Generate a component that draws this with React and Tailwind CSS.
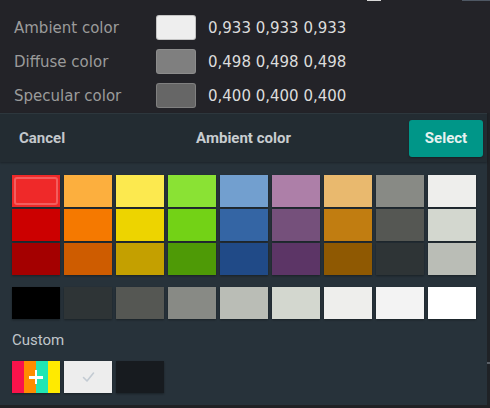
import React from "react";

const rows = [
  ["#ef2929", "#fcaf3e", "#fce94f", "#8ae234", "#729fcf", "#ad7fa8", "#e9b96e", "#888a85", "#eeeeec"],
  ["#cc0000", "#f57900", "#edd400", "#73d216", "#3465a4", "#75507b", "#c17d11", "#555753", "#d3d7cf"],
  ["#a40000", "#ce5c00", "#c4a000", "#4e9a06", "#204a87", "#5c3566", "#8f5902", "#2e3436", "#babdb6"],
];
const grays = ["#000000", "#2e3436", "#555753", "#888a85", "#babdb6", "#d3d7cf", "#eeeeec", "#f3f3f3", "#ffffff"];

const props = [
  ["Ambient color", "#eeeeee", "0,933 0,933 0,933"],
  ["Diffuse color", "#7f7f7f", "0,498 0,498 0,498"],
  ["Specular color", "#666666", "0,400 0,400 0,400"],
];

function Swatch({ color, selected }) {
  return (
    <div
      className="relative w-[48px] h-[32px] shadow-[0_1px_2px_rgba(0,0,0,0.35)]"
      style={{ backgroundColor: color }}
    >
      {selected && (
        <div className="absolute inset-[2px] rounded-[3px] border-2 border-white/25" />
      )}
    </div>
  );
}

export default function App() {
  return (
    <div className="w-[490px] h-[408px] bg-[#232328] overflow-hidden flex flex-col" style={{ fontFamily: '"DejaVu Sans", sans-serif' }}>
      <div className="h-[15px] flex items-start">
        <div className="ml-[367px] w-[14px] h-[1px] bg-[#d8d8d8]" />
        <div className="ml-[81px] w-[28px] h-[1px] bg-[#6a7a8a]/60" />
      </div>
      <div className="flex flex-col gap-[9px]">
        {props.map(([label, color, value]) => (
          <div key={label} className="h-[25px] flex items-center">
            <div className="w-[156px] pl-[14px] text-[15px] leading-[18px] text-[#9b9b9b]">{label}</div>
            <div
              className="w-[40px] h-[25px] rounded-[3px] border border-[#9a9a9a]/50"
              style={{ backgroundColor: color }}
            />
            <div className="ml-[12px] text-[15px] leading-[18px] text-[#dcdcdc]">{value}</div>
          </div>
        ))}
      </div>
      <div className="mt-[5px] flex" style={{ fontFamily: 'Roboto, "Liberation Sans", sans-serif' }}>
        <div className="w-[487px] flex flex-col">
          <div className="h-[49px] bg-[#232c32] border-t border-[#2d373d] grid grid-cols-[1fr_auto_1fr] items-center shadow-[0_1px_2px_rgba(0,0,0,0.3)] relative z-10">
            <div className="pl-[19px] text-[15px] font-bold text-[#c3c8cc]">Cancel</div>
            <div className="text-[15px] font-bold text-[#c8cdd0]">Ambient color</div>
            <div className="flex justify-end pr-[4px]">
              <button className="w-[74px] h-[37px] rounded-[3px] bg-[#009688] text-[15px] font-bold text-[#e6f2f0] shadow-[0_1px_2px_rgba(0,0,0,0.3)]">
                Select
              </button>
            </div>
          </div>
          <div className="bg-[#27323a] pt-[13px] pb-[12px] px-[12px] flex flex-col">
            <div className="grid grid-cols-[repeat(9,48px)] gap-x-[4px] gap-y-[2px]">
              {rows.flat().map((c, i) => (
                <Swatch key={i} color={c} selected={i === 0} />
              ))}
            </div>
            <div className="mt-[12px] grid grid-cols-[repeat(9,48px)] gap-x-[4px]">
              {grays.map((c, i) => (
                <Swatch key={i} color={c} />
              ))}
            </div>
            <div className="mt-[12px] h-[18px] text-[15px] leading-[18px] text-[#c0c6ca]">Custom</div>
            <div className="mt-[12px] flex gap-[4px]">
              <div className="relative w-[48px] h-[32px] flex shadow-[0_1px_2px_rgba(0,0,0,0.35)]">
                <div className="w-[12px] bg-[#f9134b]" />
                <div className="w-[12px] bg-[#ff8c00]" />
                <div className="w-[12px] bg-[#21e6b4]" />
                <div className="w-[12px] bg-[#ffea00]" />
                <div className="absolute left-[17px] top-[15px] w-[14px] h-[2.5px] bg-white" />
                <div className="absolute left-[22.75px] top-[9px] w-[2.5px] h-[14px] bg-white" />
              </div>
              <div className="w-[48px] h-[32px] bg-[#ededed] flex items-center justify-center shadow-[0_1px_2px_rgba(0,0,0,0.35)]">
                <svg width="13" height="12" viewBox="0 0 13 12" fill="none">
                  <path d="M1.5 6.5 L5 10 L11.5 2" stroke="#c3cbd3" strokeWidth="1.6" strokeLinecap="round" strokeLinejoin="round" />
                </svg>
              </div>
              <div className="w-[48px] h-[32px] bg-[#171b1f] shadow-[0_1px_2px_rgba(0,0,0,0.35)]" />
            </div>
          </div>
        </div>
        <div className="w-[3px] bg-[#1f2226] flex flex-col">
          <div className="h-[249px]" />
          <div className="h-[2px] bg-[#5a5f66]" />
        </div>
      </div>
      <div className="flex-1 bg-[#202124]" />
    </div>
  );
}
